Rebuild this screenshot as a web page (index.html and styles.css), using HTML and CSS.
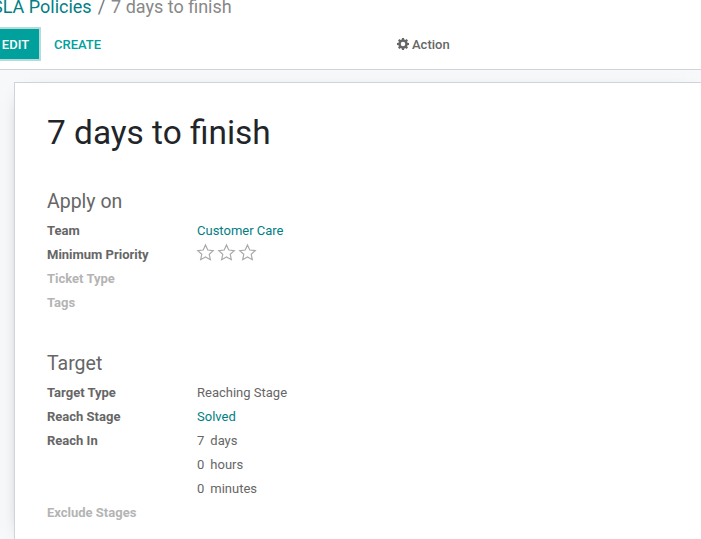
FILE: index.html
```html
<!DOCTYPE html>
<html lang="en">
<head>
<meta charset="utf-8">
<title>7 days to finish</title>
<link rel="stylesheet" href="styles.css">
</head>
<body>
<header class="control-panel">
  <div class="breadcrumb"><span class="crumb-link">SLA Policies</span><span class="crumb-sep">/</span><span class="crumb-current">7 days to finish</span></div>
  <div class="toolbar">
    <div class="toolbar-left">
      <button class="btn-edit">EDIT</button>
      <button class="btn-create">CREATE</button>
    </div>
    <div class="action">
      <svg class="gear" viewBox="0 0 24 24" width="12" height="12"><path fill="#666" fill-rule="evenodd" d="M10 0h4l.6 3.100 1.900.8L19.100 2 22 4.900l-1.900 2.600.8 1.900L24 10v4l-3.100.6-.8 1.900 1.900 2.600-2.900 2.900-2.600-1.900-1.900.8L14 24h-4l-.6-3.100-1.900-.8L4.900 22 2 19.100l1.900-2.600-.8-1.900L0 14v-4l3.100-.6.8-1.900L2 4.900 4.900 2l2.600 1.900 1.900-.8zM12 7.500a4.500 4.500 0 1 0 0 9 4.500 4.500 0 0 0 0-9z"/></svg>
      <span>Action</span>
    </div>
  </div>
</header>
<main class="content">
  <section class="sheet">
    <h1 class="title">7 days to finish</h1>
    <h2 class="group-title first">Apply on</h2>
    <dl class="fields">
      <dt>Team</dt><dd class="link">Customer Care</dd>
      <dt>Minimum Priority</dt>
      <dd class="stars">
        <svg viewBox="0 0 24 24" width="19" height="19"><path class="star" d="M12 2.500l2.900 6.300 6.900.8-5.100 4.700 1.400 6.800-6.100-3.400-6.100 3.400 1.400-6.800-5.100-4.700 6.900-.8z"/></svg>
        <svg viewBox="0 0 24 24" width="19" height="19"><path class="star" d="M12 2.500l2.900 6.300 6.900.8-5.100 4.700 1.400 6.800-6.100-3.400-6.100 3.400 1.400-6.800-5.100-4.700 6.900-.8z"/></svg>
        <svg viewBox="0 0 24 24" width="19" height="19"><path class="star" d="M12 2.500l2.900 6.300 6.900.8-5.100 4.700 1.400 6.800-6.100-3.400-6.100 3.400 1.400-6.800-5.100-4.700 6.900-.8z"/></svg>
      </dd>
      <dt class="muted">Ticket Type</dt><dd></dd>
      <dt class="muted">Tags</dt><dd></dd>
    </dl>
    <h2 class="group-title second">Target</h2>
    <dl class="fields">
      <dt>Target Type</dt><dd>Reaching Stage</dd>
      <dt>Reach Stage</dt><dd class="link">Solved</dd>
      <dt>Reach In</dt><dd class="dur"><span>7</span><span>days</span></dd>
      <dt></dt><dd class="dur"><span>0</span><span>hours</span></dd>
      <dt></dt><dd class="dur"><span>0</span><span>minutes</span></dd>
      <dt class="muted">Exclude Stages</dt><dd></dd>
    </dl>
  </section>
</main>
</body>
</html>
```
FILE: styles.css
```css
* { box-sizing: border-box; }
html, body { margin: 0; height: 100%; overflow: hidden; }
body {
  width: 701px;
  height: 539px;
  font-family: Roboto, "Noto Sans", sans-serif;
  font-size: 13px;
  color: #666;
  background: #fff;
  display: flex;
  flex-direction: column;
}
.control-panel {
  height: 70px;
  flex: none;
  border-bottom: 1px solid #ced4da;
  background: #fff;
}
.breadcrumb {
  height: 28px;
  margin-left: -8px;
  margin-top: -7px;
  font-size: 18px;
  line-height: 28px;
  white-space: nowrap;
  display: flex;
}
.crumb-link { color: #017e84; }
.crumb-sep { color: #6c757d; margin: 0 6px; }
.crumb-current { color: #888; }
.toolbar {
  display: flex;
  margin-top: 8px;
  height: 30px;
  align-items: center;
}
.toolbar-left { display: flex; width: 406px; align-items: center; margin-left: -9px; }
button {
  font: 500 13px Roboto, sans-serif;
  border: 0;
  height: 30px;
}
.btn-edit {
  width: 48px;
  padding: 0 0 0 1px;
  color: #fff;
  background: #00a09d;
  box-shadow: 0 0 0 2px #b5dcdb;
}
.btn-create {
  background: none;
  color: #00a09d;
  padding: 0;
  margin-left: 15px;
}
.action {
  display: flex;
  align-items: center;
  gap: 3px;
  font-weight: 500;
  font-size: 13px;
  color: #666;
}
.content {
  flex: 1;
  min-height: 0;
  background: #f7f8f9;
  padding: 12px 0 0 14px;
}
.sheet {
  height: 100%;
  background: #fff;
  border: 1px solid #ced4da;
  border-right: 0;
  border-bottom: 0;
  padding: 31px 0 0 32px;
  box-shadow: 0 5px 20px -15px #000;
}
.title {
  margin: 0;
  font-size: 33.4px;
  font-weight: 400;
  line-height: 38px;
  color: #212529;
}
.group-title {
  margin: 0;
  font-size: 19.5px;
  font-weight: 400;
  line-height: 24px;
  color: #666;
}
.group-title.first { margin-top: 38px; }
.group-title.second { margin-top: 37px; }
.fields {
  margin: 5px 0 0;
  display: grid;
  grid-template-columns: 150px 1fr;
  grid-auto-rows: 24px;
  line-height: 24px;
}
dt { font-weight: 700; color: #666; }
dt.muted { color: #b4b4b4; }
dd { margin: 0; }
.link { color: #017e84; }
.stars { display: flex; gap: 2px; margin-top: -3px; margin-left: -1px; height: 24px; align-items: center; }
.star { fill: none; stroke: #a9a9a9; stroke-width: 1.500; }
.dur { display: flex; gap: 6px; }
```
